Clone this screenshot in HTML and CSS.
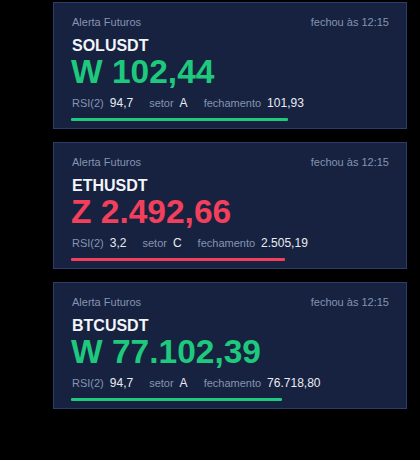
FILE: index.html
```html
<!DOCTYPE html>
<html lang="pt">
<head>
<meta charset="utf-8">
<link rel="stylesheet" href="styles.css">
</head>
<body>
<div class="list">
  <div class="card">
    <div class="head"><span>Alerta Futuros</span><span>fechou às 12:15</span></div>
    <div class="sym">SOLUSDT</div>
    <div class="price up">W 102,44</div>
    <div class="meta">
      <span class="item"><span class="lbl">RSI(2)</span><span class="val">94,7</span></span>
      <span class="item"><span class="lbl">setor</span><span class="val">A</span></span>
      <span class="item"><span class="lbl">fechamento</span><span class="val">101,93</span></span>
    </div>
    <div class="bar up-bg" style="width:217px"></div>
  </div>
  <div class="card">
    <div class="head"><span>Alerta Futuros</span><span>fechou às 12:15</span></div>
    <div class="sym">ETHUSDT</div>
    <div class="price down">Z 2.492,66</div>
    <div class="meta">
      <span class="item"><span class="lbl">RSI(2)</span><span class="val">3,2</span></span>
      <span class="item"><span class="lbl">setor</span><span class="val">C</span></span>
      <span class="item"><span class="lbl">fechamento</span><span class="val">2.505,19</span></span>
    </div>
    <div class="bar down-bg" style="width:214px"></div>
  </div>
  <div class="card">
    <div class="head"><span>Alerta Futuros</span><span>fechou às 12:15</span></div>
    <div class="sym">BTCUSDT</div>
    <div class="price up">W 77.102,39</div>
    <div class="meta">
      <span class="item"><span class="lbl">RSI(2)</span><span class="val">94,7</span></span>
      <span class="item"><span class="lbl">setor</span><span class="val">A</span></span>
      <span class="item"><span class="lbl">fechamento</span><span class="val">76.718,80</span></span>
    </div>
    <div class="bar up-bg" style="width:211px"></div>
  </div>
</div>
</body>
</html>
```
FILE: styles.css
```css
html, body {
  margin: 0;
  padding: 0;
  background: #000;
}
body {
  font-family: "Liberation Sans", Arial, sans-serif;
}
.list {
  display: flex;
  flex-direction: column;
  gap: 13px;
  padding: 2px 0 0 53px;
  width: 354px;
}
.card {
  background: #16223f;
  border: 1px solid #2b3d68;
  padding: 13px 17px 7px 17px;
  display: flex;
  flex-direction: column;
}
.head {
  display: flex;
  justify-content: space-between;
  font-size: 11px;
  line-height: 13px;
  color: #8594b3;
  padding-left: 1px;
}
.sym {
  margin-top: 7px;
  font-size: 16px;
  font-weight: bold;
  line-height: 19px;
  color: #f2f5fa;
  padding-left: 1px;
}
.price {
  font-size: 33.5px;
  font-weight: bold;
  line-height: 34px;
}
.up { color: #1ec97d; }
.down { color: #f2405c; }
.meta {
  margin-top: 7px;
  display: flex;
  gap: 16px;
  line-height: 14px;
  align-items: baseline;
  padding-left: 1px;
}
.item {
  display: flex;
  gap: 6px;
  align-items: baseline;
}
.lbl {
  font-size: 11px;
  color: #8594b3;
}
.val {
  font-size: 12px;
  color: #e8ecf4;
}
.bar {
  margin-top: 8px;
  height: 3px;
  border-radius: 1px;
}
.up-bg { background: #1ec97d; }
.down-bg { background: #f2405c; }
```
